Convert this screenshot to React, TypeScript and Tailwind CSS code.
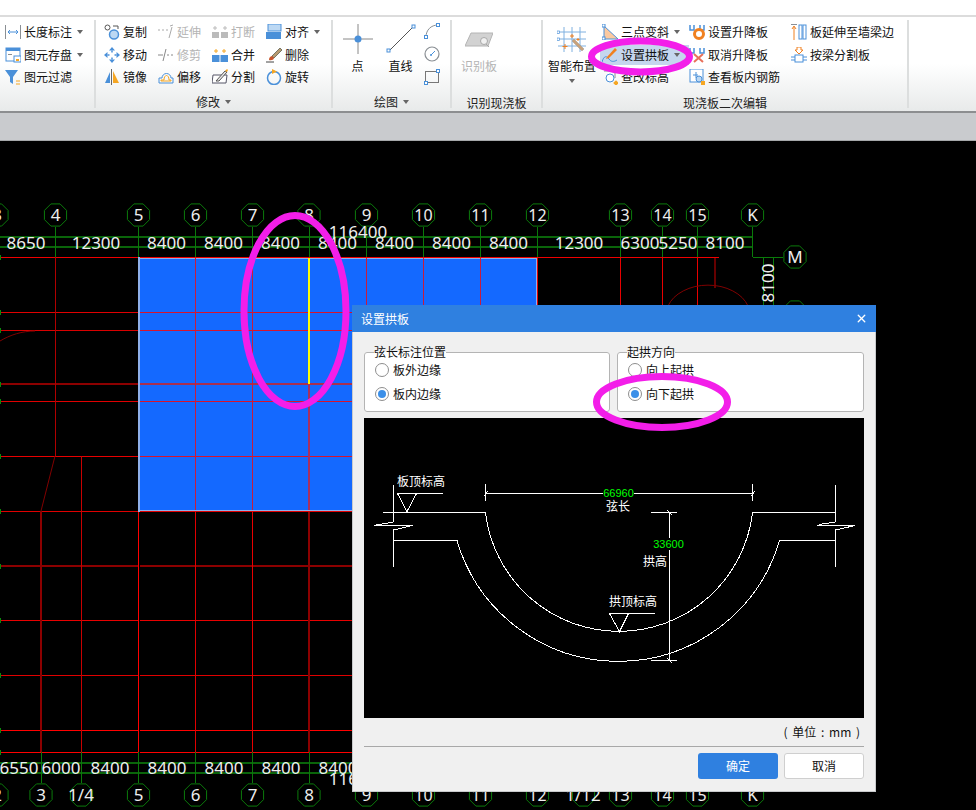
import React from 'react';
import { X } from 'lucide-react';

const blue = '#4a90d9';
const orange = '#f5a623';
const gray = '#8a8f94';

const icons: Record<string, React.ReactNode> = {
  dim: (
    <>
      <path d="M.5 1v14M15.5 1v14" stroke={gray} fill="none" />
      <path d="M3 8h10M5 6 3 8l2 2M11 6l2 2-2 2" stroke={blue} fill="none" />
    </>
  ),
  save: (
    <>
      <rect x="1" y="1" width="14" height="13" fill="#fff" stroke={blue} />
      <rect x="1" y="1" width="14" height="3" fill={blue} />
      <rect x="3" y="7" width="4" height="1" fill={gray} />
      <rect x="9" y="9" width="7" height="6" fill="#fff" stroke={blue} />
      <rect x="11" y="12" width="3" height="2" fill={orange} />
    </>
  ),
  filter: (
    <>
      <path d="M0 1h13L8 8v7L5 13V8z" fill={blue} />
      <path d="M11 12h4M11 15h4" stroke={orange} />
    </>
  ),
  copy: (
    <>
      <circle cx="3.5" cy="3.5" r="2.5" fill="#fff" stroke="#555" />
      <circle cx="10" cy="10.5" r="4.5" fill="#bcd8f3" stroke={blue} strokeWidth="1.5" />
      <path d="M9 2h5v3" stroke="#555" fill="none" />
    </>
  ),
  move: (
    <>
      <path d="M8 0l3 3.500H5zM8 16l3-3.500H5zM0 8l3.500-3v6zM16 8l-3.500-3v6z" fill={blue} />
      <path d="M8 3.500v2M8 10.500v2M3.500 8h2M10.500 8h2" stroke={blue} strokeWidth="1.500" />
    </>
  ),
  mirror: (
    <>
      <path d="M6 3v11H1z" fill={blue} />
      <path d="M9 2v12h6z" fill={orange} />
      <path d="M7.500 0v16" stroke="#666" />
    </>
  ),
  extend: <path d="M0 6h2M4 6h2M8 6h2M12 2l3-1M14 3l-3 11" stroke="#aaa" fill="none" />,
  trim: <path d="M0 8h5M9 8h2M13 8h2M8 2 5 14" stroke="#888" fill="none" />,
  offset: (
    <>
      <path d="M1 14V9h3a4.500 4.500 0 1 1 9 0h2v5z" fill="none" stroke={blue} />
      <path d="M3 12v-1h3c0-6 5-6 5 0h2v1z" fill="none" stroke={orange} />
    </>
  ),
  breakIcon: (
    <>
      <rect x="0" y="8" width="7" height="6" fill="#bbb" />
      <rect x="9" y="8" width="7" height="6" fill="#bbb" />
      <path d="M3 2v4M1 4h4M13 2v4M11 4h4" stroke="#bbb" />
    </>
  ),
  merge: (
    <>
      <rect x="0" y="8" width="16" height="7" fill={blue} />
      <path d="M8 8v7" stroke="#fff" />
      <path d="M4 2v4M2 4h4M12 2v4M10 4h4" stroke={orange} />
    </>
  ),
  split: (
    <>
      <path d="M1 6h14l-1 8H0z" fill="#fff" stroke="#556" />
      <path d="M4 12 13 2l2 1-8 9z" fill="#e8e8e8" stroke="#555" />
      <path d="M13 2l2 1 1-2-1-1z" fill={orange} />
    </>
  ),
  align: (
    <>
      <rect x="2" y="0" width="13" height="7" fill="#bcd8f3" stroke={blue} />
      <rect x="0" y="8" width="15" height="7" fill={blue} />
    </>
  ),
  erase: (
    <>
      <path d="M6 9 14 1l2 2-8 8z" fill="#b89a70" stroke="#776" />
      <path d="M3 13c0-3 2-4 3-4l2 2c0 1-2 3-5 2z" fill="#c8552b" />
      <path d="M0 15h8" stroke="#444" />
    </>
  ),
  rotate: (
    <>
      <circle cx="8" cy="9" r="6.500" fill="none" stroke={blue} strokeWidth="1.500" />
      <path d="M6 0l5 2.500L6 5z" fill={orange} />
    </>
  ),
  threePoint: (
    <>
      <path d="M2 2v13h14z" fill="#fbc9a0" stroke={blue} />
      <rect x="0" y="0" width="3" height="3" fill="#fff" stroke={blue} />
      <rect x="0" y="13" width="3" height="3" fill="#fff" stroke={blue} />
    </>
  ),
  arch: (
    <>
      <path d="M0 15c2-7 5-6 7-3 2 3 5 3 8 1" fill="none" stroke={blue} />
      <path d="M5 10 13 1l2 2-8 8-3 1z" fill="#f08020" />
    </>
  ),
  elevation: (
    <>
      <path d="M2 2h11v7" fill="none" stroke={gray} />
      <circle cx="8" cy="9" r="4" fill="#fff" stroke={blue} />
      <rect x="12" y="12" width="4" height="4" transform="rotate(45 14 14)" fill={orange} />
    </>
  ),
  raise: (
    <>
      <path d="M1 1v5h4V1M11 1v5h4V1" fill="none" stroke={blue} strokeWidth="1.500" />
      <circle cx="10" cy="10" r="4.500" fill="none" stroke="#f08020" strokeWidth="3" />
    </>
  ),
  cancelRaise: (
    <>
      <path d="M1 1v5h4V1M11 1v5h4V1" fill="none" stroke={blue} strokeWidth="1.500" />
      <path d="M5 7l9 8M14 7l-9 8" stroke="#e8705a" strokeWidth="2" />
    </>
  ),
  rebar: (
    <>
      <rect x="1" y="0" width="13" height="13" fill="#fff" stroke={blue} />
      <path d="M7 3v6M4 6h5" stroke={blue} />
      <circle cx="10" cy="10" r="3" fill="#bcd8f3" stroke={blue} />
      <rect x="12" y="12" width="4" height="4" fill={orange} />
    </>
  ),
  extendWall: (
    <>
      <path d="M3 16V3M1 5l2-3 2 3" stroke="#f08020" fill="none" />
      <path d="M0 .500h6" stroke={gray} />
      <rect x="8" y="1" width="3" height="14" fill="#fff" stroke={blue} />
      <rect x="12" y="1" width="3" height="14" fill="#fff" stroke={blue} />
    </>
  ),
  splitBeam: (
    <>
      <path d="M6 0h4v3h2L8 7 4 3h2z" fill="#fff" stroke="#f08020" />
      <rect x="4" y="8" width="8" height="7" fill="#fff" stroke={blue} />
      <path d="M0 10h4M0 13h4M12 10h4M12 13h4" stroke={blue} />
    </>
  ),
};

function Caret() {
  return <span className="ml-[5px] w-0 h-0 border-x-[3.5px] border-x-transparent border-t-[4px] border-t-[#666]" />;
}

type ToolProps = { icon: string; label: string; arrow?: boolean; disabled?: boolean; active?: boolean };

function Tool({ icon, label, arrow, disabled, active }: ToolProps) {
  return (
    <div className={`flex items-center h-[22.500px] whitespace-nowrap ${disabled ? 'text-[#b4b4b4]' : 'text-[#111]'}`}>
      <div className={`flex items-center h-[20px] ${active ? 'bg-[#c5d6ee] pl-[2px] pr-[9px] -ml-[2px]' : ''}`}>
        <svg viewBox="0 0 16 16" className="w-[16px] h-[16px] mr-[3px] shrink-0">
          {icons[icon]}
        </svg>
        <span>{label}</span>
        {arrow && <Caret />}
      </div>
    </div>
  );
}

function Group({ title, caret, width, children }: { title: string; caret?: boolean; width: string; children: React.ReactNode }) {
  return (
    <div className={`flex flex-col shrink-0 ${width}`}>
      <div className="h-[77px] pt-[4px] flex">{children}</div>
      <div className={`flex-1 flex items-center justify-center text-[#222] ${caret ? 'pb-[2px]' : ''}`}>
        {title}
        {caret && <Caret />}
      </div>
    </div>
  );
}

function Sep() {
  return <div className="w-[2px] shrink-0 my-[3px] bg-[#dcdede]" />;
}

function Ribbon() {
  return (
    <div className="h-[98px] flex text-[12px] leading-[14px] border-t-2 border-t-[#dcdcdc] border-b-2 border-b-[#8c8e90] bg-gradient-to-b from-white via-white to-[#e8eaea]">
      <Group title="" width="w-[94px]">
        <div className="pl-[5px] flex flex-col">
          <Tool icon="dim" label="长度标注" arrow />
          <Tool icon="save" label="图元存盘" arrow />
          <Tool icon="filter" label="图元过滤" />
        </div>
      </Group>
      <Sep />
      <Group title="修改" caret width="w-[235px]">
        <div className="pl-[8px] grid grid-cols-[54px_54px_54px_60px] content-start">
          <Tool icon="copy" label="复制" />
          <Tool icon="extend" label="延伸" disabled />
          <Tool icon="breakIcon" label="打断" disabled />
          <Tool icon="align" label="对齐" arrow />
          <Tool icon="move" label="移动" />
          <Tool icon="trim" label="修剪" disabled />
          <Tool icon="merge" label="合并" />
          <Tool icon="erase" label="删除" />
          <Tool icon="mirror" label="镜像" />
          <Tool icon="offset" label="偏移" />
          <Tool icon="split" label="分割" />
          <Tool icon="rotate" label="旋转" />
        </div>
      </Group>
      <Sep />
      <Group title="绘图" caret width="w-[117px]">
        <div className="pl-[10px] flex">
          <div className="w-[29px] flex flex-col items-center">
            <svg viewBox="0 0 30 30" className="w-[30px] h-[30px] mt-[3px]">
              <path d="M15 0v30M0 15h30" stroke="#888" />
              <circle cx="15" cy="15" r="3.500" fill={blue} />
            </svg>
            <span className="mt-[5px] text-[#111]">点</span>
          </div>
          <div className="w-[29px] ml-[14px] flex flex-col items-center">
            <svg viewBox="0 0 30 30" className="w-[30px] h-[30px] mt-[3px]">
              <path d="M3 27 27 3" stroke="#555" />
              <rect x="1" y="25" width="3" height="3" fill="#fff" stroke={blue} />
              <rect x="26" y="1" width="3" height="3" fill="#fff" stroke={blue} />
            </svg>
            <span className="mt-[5px] whitespace-nowrap text-[#111]">直线</span>
          </div>
          <div className="ml-[9px] flex flex-col gap-[7px] pt-[2px]">
            <svg viewBox="0 0 16 16" className="w-[16px] h-[16px]">
              <path d="M2 14C2 7 7 2 14 2" fill="none" stroke={gray} />
              <rect x="0.500" y="12.500" width="3" height="3" fill="#fff" stroke={blue} />
              <rect x="12.500" y="0.500" width="3" height="3" fill="#fff" stroke={blue} />
            </svg>
            <svg viewBox="0 0 16 16" className="w-[16px] h-[16px]">
              <circle cx="8" cy="8" r="7" fill="none" stroke={gray} strokeWidth="1.200" />
              <path d="M7 9l4-4" stroke={blue} />
              <circle cx="7" cy="9" r="1" fill={blue} />
            </svg>
            <svg viewBox="0 0 16 16" className="w-[16px] h-[16px]">
              <rect x="1.500" y="2.500" width="13" height="11" fill="none" stroke="#777" />
              <rect x="0.500" y="12.500" width="3" height="3" fill="#fff" stroke={blue} />
              <rect x="12.500" y="0.500" width="3" height="3" fill="#fff" stroke={blue} />
            </svg>
          </div>
        </div>
      </Group>
      <Sep />
      <Group title="识别现浇板" width="w-[89px]">
        <div className="pl-[9px] flex flex-col items-start">
          <svg viewBox="0 0 28 16" className="w-[28px] h-[16px] mt-[11px] ml-[4px]">
            <path d="M6 1h22l-5 13H0z" fill="#d2d2d2" stroke="#b4b4b4" />
            <circle cx="19" cy="9" r="3.500" fill="#f0f0f0" stroke="#a8a8a8" />
            <path d="M21 12l3 3" stroke="#a8a8a8" />
          </svg>
          <span className="mt-[11px] text-[#b4b4b4]">识别板</span>
        </div>
      </Group>
      <Sep />
      <Group title="现浇板二次编辑" width="w-[364px]">
        <div className="flex">
          <div className="w-[59px] pl-[2px] pr-[3px] flex flex-col items-center">
            <svg viewBox="0 0 30 30" className="w-[30px] h-[30px] mt-[4px] shrink-0">
              <path d="M7 2v25M15 2v25M23 2v25M1 7h28M1 14h28M1 21h28" stroke="#7fb0e0" fill="none" />
              <rect x="0" y="6" width="2.500" height="2.500" fill="#fff" stroke={blue} strokeWidth=".700" />
              <rect x="0" y="13" width="2.500" height="2.500" fill="#fff" stroke={blue} strokeWidth=".700" />
              <path d="M15 16l10 10 2-2-10-10z" fill="#c9a27a" stroke="#999" strokeWidth=".500" />
              <path d="M8 19v5M5.500 21.500h5M15 9v4M13 11h4M21 13v3M19.500 14.500h3" stroke="#f08020" />
            </svg>
            <span className="mt-[4px] whitespace-nowrap text-[#111]">智能布置</span>
            <span className="mt-[6px] w-0 h-0 border-x-[3.500px] border-x-transparent border-t-[4px] border-t-[#666]" />
          </div>
          <div className="w-[87px] flex flex-col">
            <Tool icon="threePoint" label="三点变斜" arrow />
            <Tool icon="arch" label="设置拱板" arrow active />
            <Tool icon="elevation" label="查改标高" />
          </div>
          <div className="w-[102px] flex flex-col">
            <Tool icon="raise" label="设置升降板" />
            <Tool icon="cancelRaise" label="取消升降板" />
            <Tool icon="rebar" label="查看板内钢筋" />
          </div>
          <div className="flex flex-col">
            <Tool icon="extendWall" label="板延伸至墙梁边" />
            <Tool icon="splitBeam" label="按梁分割板" />
          </div>
        </div>
      </Group>
      <Sep />
    </div>
  );
}

const colsTop: [number, string][] = [
  [-3, '3'], [55.500, '4'], [138.500, '5'], [195.500, '6'], [252.500, '7'], [309, '8'], [366.500, '9'], [423.500, '10'],
  [480.500, '11'], [537.500, '12'], [620.500, '13'], [662.500, '14'], [697.500, '15'], [752.500, 'K'],
];
const colsBottom: [number, string][] = [
  [-3, '2'], [41, '3'], [81.500, ''], [138.500, '5'], [195.500, '6'], [252.500, '7'], [309, '8'], [366.500, '9'], [423.500, '10'],
  [480.500, '11'], [537.500, '12'], [583.500, ''], [620.500, '13'], [662.500, '14'], [697.500, '15'], [752.500, 'K'],
];
const dimsTop: [number, string][] = [
  [26, '8650'], [96, '12300'], [166.500, '8400'], [223.500, '8400'], [280.500, '8400'], [337.500, '8400'],
  [394.500, '8400'], [451.500, '8400'], [508.500, '8400'], [579, '12300'], [640, '6300'], [678, '5250'], [725, '8100'],
];
const dimsBottom: [number, string][] = [
  [19, '6550'], [61, '6000'], [110, '8400'], [167, '8400'], [224, '8400'], [281, '8400'], [338, '8400'],
];
// [position, colour, width] - the heavy dark ones are 2px in the drawing
const rows: [number, string, number][] = [
  [257.500, '#f00000', 1], [312.500, '#e00000', 1], [330.500, '#d80000', 1], [384, '#8c0000', 2], [401.500, '#e00000', 1],
  [456.500, '#e80000', 1], [511.500, '#e00000', 1], [566, '#8c0000', 2], [620.500, '#e80000', 1], [675.500, '#e00000', 1],
  [730.500, '#ff0000', 1], [752.500, '#ff0000', 1],
];
const cols: [number, string, number][] = [
  [195.500, '#e00000', 1], [252.500, '#e80000', 1], [309, '#8c0000', 2], [366.500, '#e00000', 1], [423.500, '#e80000', 1],
  [480.500, '#e80000', 1], [537.500, '#e80000', 1], [620.500, '#e80000', 1], [662.500, '#e80000', 1], [697.500, '#e80000', 1],
];

function Bubble({ x, y, label }: { x: number; y: number; label: string }) {
  const r = 12;
  const pts = Array.from({ length: 8 }, (_, i) => {
    const a = Math.PI / 8 + (i * Math.PI) / 4;
    return `${x + r * Math.cos(a)},${y + r * Math.sin(a)}`;
  }).join(' ');
  return (
    <>
      <polygon points={pts} fill="none" stroke="#0b7a0b" />
      <text x={x} y={y + 6} textAnchor="middle" fontSize={label.length > 1 ? 16 : 17} fill="#eee">
        {label}
      </text>
    </>
  );
}

function CadCanvas() {
  return (
    <svg viewBox="0 141 976 669" className="absolute inset-0 w-full h-full font-['Noto_Sans',sans-serif]">
      <rect x="139" y="258" width="398" height="253" fill="#1469ff" stroke="#8fb0ea" strokeWidth="2" />
      <g shapeRendering="crispEdges">
        {rows.map(([y, c, w]) => (
          <React.Fragment key={y}>
            <line x1="0" x2="138" y1={y} y2={y} stroke={c} strokeWidth={w} />
            <line
              x1="140"
              x2={y === 257.500 ? 719 : 700}
              y1={y}
              y2={y}
              stroke={y > 258 && y < 511 ? (w === 2 ? '#a83050' : '#d8142c') : c}
              strokeWidth={w}
            />
          </React.Fragment>
        ))}
        {cols.map(([x, c, w]) => (
          <React.Fragment key={x}>
            <line x1={x} x2={x} y1="258" y2="510" stroke={x > 537 ? c : w === 2 ? '#a83060' : '#c81c3c'} strokeWidth={w} />
            <line x1={x} x2={x} y1="512" y2="752" stroke={c} strokeWidth={w} />
          </React.Fragment>
        ))}
        <line x1="138.500" x2="138.500" y1="512" y2="752" stroke="#ff0000" />
        <line x1="55.500" x2="55.500" y1="257" y2="456" stroke="#b00000" />
        <line x1="81.500" x2="81.500" y1="456" y2="752" stroke="#c80000" />
        <line x1="41" x2="41" y1="511" y2="752" stroke="#8c0000" strokeWidth="2" />
        <line x1="714.500" x2="714.500" y1="258" y2="288" stroke="#660000" strokeWidth="2" />
        <rect x="308" y="258" width="2" height="126" fill="#ffff00" />
        {rows.map(([y]) => (
          <rect key={y} x="0" y={Math.floor(y) - 2} width="1" height="5" fill="#0b8a0b" />
        ))}
      </g>
      <path d="M55 456 41 511" stroke="#800000" fill="none" />
      <path d="M0 341C10 335 22 331 35 331" stroke="#800000" fill="none" />
      <path d="M668 306A42 30 0 0 1 748 306" stroke="#800000" fill="none" />

      <g shapeRendering="crispEdges" stroke="#0a7a0a">
        <path d="M0 237H752M0 247H752M0 763H352M0 773H352" fill="none" strokeWidth="2" stroke="#0a640a" />
        {colsTop.map(([x]) => (
          <line key={x} x1={x} x2={x} y1="227" y2="257" />
        ))}
        {colsBottom.map(([x]) => (
          <line key={x} x1={x} x2={x} y1="752" y2="783" />
        ))}
        <path d="M752.500 257.500H783M763.500 257V306M773.500 257V306" fill="none" />
      </g>
      {colsTop.map(([x, l]) => (
        <Bubble key={x} x={x} y={215} label={l} />
      ))}
      {colsBottom.map(([x, l]) => (
        <Bubble key={x} x={x} y={795} label={l} />
      ))}
      <Bubble x={795} y={257} label="M" />
      <Bubble x={795} y={312} label="" />
      <g fill="#eee" fontSize="17" textAnchor="middle">
        {dimsTop.map(([x, t]) => (
          <text key={x} x={x} y="249">{t}</text>
        ))}
        {dimsBottom.map(([x, t]) => (
          <text key={x} x={x} y="774">{t}</text>
        ))}
        <text x="358" y="238">116400</text>
        <text x="358" y="785">116400</text>
        <text x="81" y="801">1/4</text>
        <text x="583" y="801">1/12</text>
        <text transform="translate(774 283) rotate(-90)" x="0" y="0">8100</text>
      </g>
    </svg>
  );
}

function ArchDiagram() {
  return (
    <svg viewBox="364 418 500 300" className="w-full h-full">
      <g fill="none" stroke="#fff" shapeRendering="crispEdges">
        <path d="M393.500 485V522L376 525M374 525.500H412.500L393.500 530V567" />
        <path d="M382.500 512.500H485.500M393.500 540.500H457" />
        <path d="M835.500 485V522L819 524.500M816.500 525.500H855L835.500 530V567" />
        <path d="M752.500 512.500H835.500M779.500 540.500H835.500" />
        <path d="M485.500 512.500A134.400 134.400 0 0 0 752.500 512.500" />
        <path d="M457 540.500A168 168 0 0 0 779.500 540.500" />
        <path d="M397.500 493.500H442.500M397.500 493.500 407 511.500 416.500 493.500" />
        <path d="M485.500 493.500H603M634 493.500H752.500M485.500 484V500.500M752.500 484V500.500M484 496 488 491M751 496 755 491" />
        <path d="M669.500 512.500V538M669.500 550V660.500M651 512.500H676.500M651 660.500H676.500M667 510 672 515M667 658 672 663" />
        <path d="M609.500 613.500H655M609.500 613.500 619.500 631.500 628.500 613.500" />
      </g>
      <g fill="#fff" fontSize="12" textAnchor="middle" className="font-['Noto_Sans_CJK_SC',sans-serif]">
        <text x="421" y="486">板顶标高</text>
        <text x="618" y="511">弦长</text>
        <text x="655" y="566">拱高</text>
        <text x="633" y="606">拱顶标高</text>
      </g>
      <g fill="#00ff00" fontSize="11" textAnchor="middle" className="font-['Liberation_Sans',sans-serif]">
        <text x="618.500" y="497">66960</text>
        <text x="668.500" y="548">33600</text>
      </g>
    </svg>
  );
}

function Radio({ label, checked }: { label: string; checked?: boolean }) {
  return (
    <div className="h-[24px] flex items-center pl-[10px]">
      <span className="w-[14px] h-[14px] mr-[4px] rounded-full border border-[#8e8e8e] bg-white flex items-center justify-center">
        {checked && <span className="w-[8px] h-[8px] rounded-full bg-[#3b8fe8]" />}
      </span>
      {label}
    </div>
  );
}

function RadioGroup({ legend, width, children }: { legend: string; width: string; children: React.ReactNode }) {
  return (
    <fieldset className={`h-[67px] ${width} border border-[#b4b4b4] rounded-[3px] bg-white`}>
      <legend className="ml-[9px] leading-[14px]">{legend}</legend>
      <div className="-mt-px">{children}</div>
    </fieldset>
  );
}

function ArchDialog() {
  return (
    <div className="absolute left-[352px] top-[164px] w-[524px] h-[487px] flex flex-col bg-[#f0f0f0] border-x border-b border-[#c8cacc] text-[12px] text-[#111]">
      <div className="h-[27px] -mx-px shrink-0 bg-[#2f80e0] text-white flex items-center justify-between pl-[9px] pr-[8px]">
        <span>设置拱板</span>
        <X size={13} strokeWidth={2.500} />
      </div>
      <div className="flex-1 px-[11px] pt-[13px] flex flex-col">
        <div className="flex gap-[7px]">
          <RadioGroup legend="弦长标注位置" width="w-[246px]">
            <Radio label="板外边缘" />
            <Radio label="板内边缘" checked />
          </RadioGroup>
          <RadioGroup legend="起拱方向" width="w-[247px]">
            <Radio label="向上起拱" />
            <Radio label="向下起拱" checked />
          </RadioGroup>
        </div>
        <div className="h-[300px] mt-[6px] bg-black">
          <ArchDiagram />
        </div>
        <div className="h-[29px] flex items-center justify-end pr-[4px] border-b border-[#a8a8a8] [word-spacing:2px]">( 单位 : mm )</div>
        <div className="flex justify-end gap-[6px] pt-[6px]">
          <button className="w-[80px] h-[26px] rounded-[3px] bg-[#2f80e0] text-white">确定</button>
          <button className="w-[80px] h-[26px] rounded-[3px] bg-white border border-[#cfcfcf]">取消</button>
        </div>
      </div>
    </div>
  );
}

export default function App() {
  return (
    <div className="relative w-[976px] h-[810px] overflow-hidden flex flex-col bg-black font-['Noto_Sans_CJK_SC',sans-serif]">
      <div className="h-[15px] bg-white shrink-0" />
      <Ribbon />
      <div className="h-[28px] shrink-0 bg-[#c9cbce] border-b border-b-[#a5a7a9]" />
      <div className="relative flex-1">
        <CadCanvas />
        <ArchDialog />
      </div>
      {/* hand-drawn markup on top of the screenshot */}
      <svg className="absolute inset-0 w-full h-full pointer-events-none" viewBox="0 0 976 810">
        <g fill="none" stroke="#f31ee9" strokeWidth="7">
          <ellipse cx="295" cy="311" rx="51" ry="95.500" />
          <ellipse cx="640.500" cy="56.500" rx="49" ry="15.500" />
          <ellipse cx="662" cy="402" rx="65.500" ry="25.500" />
        </g>
      </svg>
    </div>
  );
}
